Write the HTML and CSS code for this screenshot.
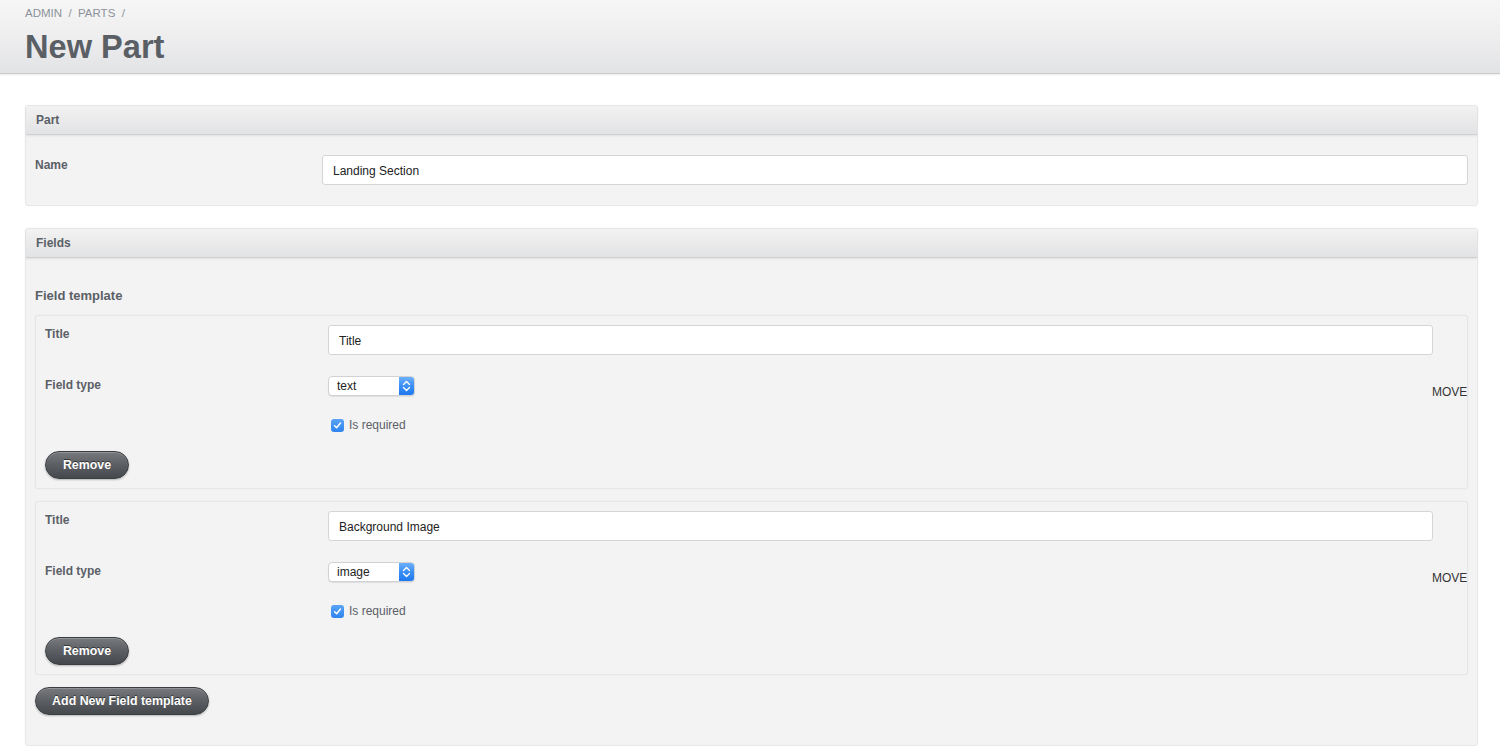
FILE: index.html
```html
<!DOCTYPE html>
<html>
<head>
<meta charset="utf-8">
<title>New Part</title>
<link rel="stylesheet" href="styles.css">
</head>
<body>
<header class="page-head">
  <div class="crumbs">ADMIN&nbsp;&nbsp;/&nbsp;&nbsp;PARTS&nbsp;&nbsp;/</div>
  <h1 class="page-title">New Part</h1>
</header>

<main class="content">
  <section class="panel panel-part">
    <div class="panel-head">Part</div>
    <div class="panel-body">
      <div class="row">
        <label class="lbl">Name</label>
        <div class="ctl"><div class="input">Landing Section</div></div>
      </div>
    </div>
  </section>

  <section class="panel panel-fields">
    <div class="panel-head">Fields</div>
    <div class="panel-body fields-body">
      <h3 class="sub">Field template</h3>

      <div class="card">
        <div class="card-main">
          <div class="row row-title">
            <label class="lbl">Title</label>
            <div class="ctl"><div class="input">Title</div></div>
          </div>
          <div class="row row-type">
            <label class="lbl">Field type</label>
            <div class="ctl">
              <div class="select"><span class="sel-text">text</span><span class="sel-arrow"><svg width="9" height="12" viewBox="0 0 9 12"><path d="M1.5 4.5 L4.5 1.5 L7.5 4.5 M1.5 7.5 L4.5 10.5 L7.5 7.5" fill="none" stroke="#fff" stroke-width="1.4" stroke-linecap="round" stroke-linejoin="round"/></svg></span></div>
            </div>
          </div>
          <div class="row row-check">
            <div class="lbl"></div>
            <div class="ctl check-line"><span class="checkbox"><svg width="9" height="9" viewBox="0 0 9 9"><path d="M1.6 4.8 L3.6 6.8 L7.5 2" fill="none" stroke="#fff" stroke-width="1.5" stroke-linecap="round" stroke-linejoin="round"/></svg></span><span class="check-text">Is required</span></div>
          </div>
          <button class="btn btn-remove">Remove</button>
        </div>
        <div class="move">MOVE</div>
      </div>

      <div class="card">
        <div class="card-main">
          <div class="row row-title">
            <label class="lbl">Title</label>
            <div class="ctl"><div class="input">Background Image</div></div>
          </div>
          <div class="row row-type">
            <label class="lbl">Field type</label>
            <div class="ctl">
              <div class="select"><span class="sel-text">image</span><span class="sel-arrow"><svg width="9" height="12" viewBox="0 0 9 12"><path d="M1.5 4.5 L4.5 1.5 L7.5 4.5 M1.5 7.5 L4.5 10.5 L7.5 7.5" fill="none" stroke="#fff" stroke-width="1.4" stroke-linecap="round" stroke-linejoin="round"/></svg></span></div>
            </div>
          </div>
          <div class="row row-check">
            <div class="lbl"></div>
            <div class="ctl check-line"><span class="checkbox"><svg width="9" height="9" viewBox="0 0 9 9"><path d="M1.6 4.8 L3.6 6.8 L7.5 2" fill="none" stroke="#fff" stroke-width="1.5" stroke-linecap="round" stroke-linejoin="round"/></svg></span><span class="check-text">Is required</span></div>
          </div>
          <button class="btn btn-remove">Remove</button>
        </div>
        <div class="move">MOVE</div>
      </div>

      <button class="btn btn-add">Add New Field template</button>
    </div>
  </section>
</main>
</body>
</html>
```

FILE: styles.css
```css
* { box-sizing: border-box; }

html, body {
  margin: 0;
  padding: 0;
  background: #ffffff;
  font-family: "Liberation Sans", Arial, Helvetica, sans-serif;
  color: #5b6067;
}

.page-head {
  height: 74px;
  padding: 6px 25px 0 25px;
  background: linear-gradient(to bottom, #f6f6f6 0%, #eeeeef 50%, #e2e3e5 100%);
  border-bottom: 1px solid #c9c9ca;
  box-shadow: 0 1px 2px rgba(0,0,0,0.08);
}

.crumbs {
  font-size: 11.5px;
  line-height: 14px;
  color: #8c929a;
}

.page-title {
  margin: 9px 0 0 0;
  font-size: 32.6px;
  line-height: 36px;
  font-weight: bold;
  color: #5a5f66;
}

.content {
  padding: 31px 22px 0 25px;
}

.panel {
  background: #f3f3f3;
  border: 1px solid #e8e8e8;
  border-radius: 3px;
  box-shadow: 0 0 2px rgba(0,0,0,0.06);
}

.panel-part { margin-bottom: 22px; }

.panel-head {
  height: 29px;
  padding: 0 10px;
  font-size: 12px;
  font-weight: bold;
  line-height: 29px;
  color: #5a5f66;
  background: linear-gradient(to bottom, #f2f2f2 0%, #e9e9ea 60%, #e2e3e5 100%);
  border-bottom: 1px solid #cfd0d2;
  box-shadow: 0 1px 2px rgba(0,0,0,0.08);
}

.panel-body {
  padding: 20px 9px 20px 9px;
}

.row {
  display: grid;
  grid-template-columns: 287px 1fr;
}

.lbl {
  display: block;
  font-size: 12px;
  font-weight: bold;
  line-height: 16px;
  padding-top: 2px;
  color: #5b6067;
}

.input {
  height: 30px;
  background: #ffffff;
  border: 1px solid #d3d6d9;
  border-radius: 3px;
  padding: 1px 10px 0 10px;
  font-size: 12px;
  line-height: 28px;
  color: #222222;
}

.fields-body {
  padding: 29px 9px 30px 9px;
}

.sub {
  margin: 0 0 11px 0;
  font-size: 13px;
  line-height: 17px;
  font-weight: bold;
  color: #5b6067;
}

.card {
  display: flex;
  background: #f3f3f3;
  border: 1px solid #e6e6e6;
  border-radius: 3px;
  box-shadow: 0 0 2px rgba(0,0,0,0.05);
  padding: 9px 0 9px 9px;
  margin-bottom: 12px;
}

.card-main {
  flex: 1;
  min-width: 0;
}

.card .row {
  grid-template-columns: 283px 1fr;
}

.card .lbl { padding-top: 1px; }

.row-title { margin-bottom: 21px; }
.row-type { margin-bottom: 22px; }
.row-check { margin-bottom: 19px; }

.move {
  width: 35px;
  flex: 0 0 35px;
  display: flex;
  align-items: center;
  font-size: 12px;
  color: #333333;
  padding-bottom: 20px;
  margin-left: -1px;
  white-space: nowrap;
}

.select {
  width: 87px;
  height: 20px;
  display: flex;
  background: #ffffff;
  border: 1px solid #d0d2d5;
  border-radius: 4px;
  box-shadow: 0 1px 1px rgba(0,0,0,0.08);
  overflow: hidden;
}

.sel-text {
  flex: 1;
  padding-left: 8px;
  font-size: 12px;
  line-height: 18px;
  color: #222222;
}

.sel-arrow {
  width: 15px;
  display: flex;
  align-items: center;
  justify-content: center;
  background: linear-gradient(to bottom, #6cb0fb 0%, #3a8ef5 50%, #1f78ee 100%);
}

.check-line {
  display: flex;
  align-items: center;
  height: 14px;
  padding-left: 3px;
}

.checkbox {
  width: 13px;
  height: 13px;
  border-radius: 3px;
  background: linear-gradient(to bottom, #5aa3f7 0%, #2f84ef 100%);
  display: flex;
  align-items: center;
  justify-content: center;
  margin-right: 5px;
}

.check-text {
  font-size: 12px;
  color: #5b6067;
}

.btn {
  display: block;
  height: 28px;
  border: 1px solid #3a3d41;
  border-radius: 14px;
  background: linear-gradient(to bottom, #77797d 0%, #5b5e62 50%, #45484c 100%);
  box-shadow: 0 1px 2px rgba(0,0,0,0.25), inset 0 1px 0 rgba(255,255,255,0.2);
  color: #ffffff;
  font-family: "Liberation Sans", Arial, Helvetica, sans-serif;
  font-size: 12.4px;
  font-weight: bold;
  text-shadow: 0 -1px 0 rgba(0,0,0,0.5);
  padding: 0;
  margin: 0;
}

.btn-remove { width: 84px; }
.btn-add { width: 174px; }
```
